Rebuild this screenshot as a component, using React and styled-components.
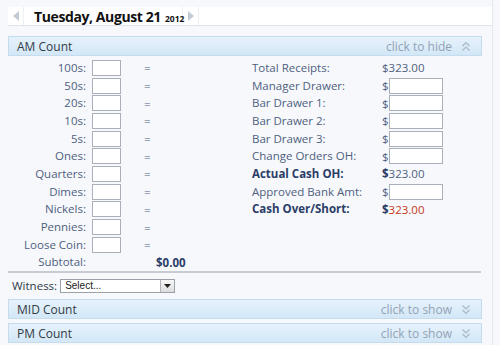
import React from "react";
import styled, { createGlobalStyle } from "styled-components";

const GlobalStyle = createGlobalStyle`
    html, body {
        margin:0;
        padding:0;
        background:#f6f8fb;
        font-family:"Open Sans", "Noto Sans", sans-serif;
    }
`

const Page = styled.div`
    width:493px;
    height:345px;
    border-right:1px solid #e4e8ee;
    box-sizing:border-box;
    overflow:hidden;
`

const TopBar = styled.div`
    margin:7px 0 0 8px;
    height:18px;
    background:#ffffff;
    border-bottom:1px solid #dfe4ea;
    display:flex;
    align-items:center;
`

const ArrowCell = styled.div`
    width:15px;
    height:18px;
    flex-shrink:0;
    display:flex;
    align-items:center;
    justify-content:center;
    border-right:1px solid #eceff3;
`

const DateCell = styled.div`
    width:159px;
    flex-shrink:0;
    box-sizing:border-box;
    padding-left:10px;
    font-size:14px;
    font-weight:700;
    color:#111;
    white-space:nowrap;
    letter-spacing:-0.4px;
    border-right:1px solid #eceff3;

    small{
        font-size:8.5px;
        margin-left:4px;
        letter-spacing:0;
    }
`

const SectionHeader = styled.div`
    margin:${(p) => p.mt}px 0 0 8px;
    width:474px;
    height:20px;
    box-sizing:border-box;
    border:1px solid #c4dcee;
    background:linear-gradient(#e6f2fc, #d3e7f6);
    display:flex;
    align-items:center;
    justify-content:space-between;
    padding:0 10px 0 8px;
    font-size:12px;
    color:#333b46;
`

const Toggle = styled.span`
    color:#93a3b7;
    font-size:12px;
    display:flex;
    align-items:center;
    gap:9px;
`

const Body = styled.div`
    display:flex;
    padding-top:3px;
`

const LeftGrid = styled.div`
    width:244px;
    padding-left:8px;
    display:grid;
    grid-template-columns:78px 29px 1fr;
    column-gap:6px;
    grid-auto-rows:17.7px;
    align-items:center;
`

const RightGrid = styled.div`
    display:grid;
    grid-template-columns:130px 1fr;
    grid-auto-rows:17.7px;
    align-items:center;
`

const Label = styled.div`
    font-size:11.5px;
    line-height:14px;
    color:${(p) => (p.bold ? "#2c3d68" : "#4f5f7f")};
    font-weight:${(p) => (p.bold ? 700 : 400)};
    text-align:${(p) => (p.right ? "right" : "left")};
    white-space:nowrap;
`

const Box = styled.div`
    width:${(p) => p.w}px;
    height:16px;
    box-sizing:border-box;
    background:#ffffff;
    border:1px solid #a9b0ba;
`

const Equals = styled.div`
    font-size:11.5px;
    color:#4f5f7f;
    padding-left:17px;
`

const Money = styled.div`
    font-size:11.5px;
    color:#4f5f7f;
    display:flex;
    align-items:center;

    b{
        color:#2c3d68;
    }
    .red{
        color:#c7381d;
    }
`

const Subtotal = styled.div`
    font-size:11.5px;
    font-weight:700;
    color:#2c3d68;
    padding-left:29px;
`

const Divider = styled.div`
    margin:0 0 0 8px;
    width:473px;
    border-top:2px solid #c8ccd2;
`

const WitnessRow = styled.div`
    height:19px;
    display:flex;
    align-items:center;
    gap:3px;
    padding:3px 0 0 12px;
    font-size:11.5px;
    color:#2f3a48;
`

const Select = styled.div`
    width:115px;
    height:14px;
    box-sizing:border-box;
    background:#fff;
    border:1px solid #9aa1aa;
    display:flex;
    align-items:center;
    justify-content:space-between;
    font-family:"Liberation Sans", Arial, sans-serif;
    font-size:10px;
    color:#222;
    padding-left:4px;
`

const SelectBtn = styled.div`
    width:13px;
    height:12px;
    border-left:1px solid #b0b5bc;
    background:linear-gradient(#f8f8f8, #dcdcdc);
    display:flex;
    align-items:center;
    justify-content:center;
`

const Tri = ({ dir }) => (
    <svg width="8" height="10" viewBox="0 0 8 10">
        {dir === "left" ? (
            <polygon points="7,0 7,10 1,5" fill="#c4cbd4" />
        ) : (
            <polygon points="1,0 1,10 7,5" fill="#c4cbd4" />
        )}
    </svg>
)

const Chevrons = ({ up }) => (
    <svg width="10" height="11" viewBox="0 0 10 11">
        <g fill="none" stroke="#a9b8ca" strokeWidth="1.2" transform={up ? "" : "rotate(180 5 5.5)"}>
            <polyline points="1.5,5 5,1.5 8.5,5" />
            <polyline points="1.5,9.5 5,6 8.5,9.5" />
        </g>
    </svg>
)

const coins = ["100s", "50s", "20s", "10s", "5s", "Ones", "Quarters", "Dimes", "Nickels", "Pennies", "Loose Coin"]

const drawers = [
    { label: "Total Receipts:", value: "$323.00" },
    { label: "Manager Drawer:", input: true },
    { label: "Bar Drawer 1:", input: true },
    { label: "Bar Drawer 2:", input: true },
    { label: "Bar Drawer 3:", input: true },
    { label: "Change Orders OH:", input: true },
    { label: "Actual Cash OH:", bold: true, value: "323.00" },
    { label: "Approved Bank Amt:", input: true },
    { label: "Cash Over/Short:", bold: true, value: "323.00", red: true },
]

const App = () => {
    return (
        <Page>
            <GlobalStyle />
            <TopBar>
                <ArrowCell>
                    <Tri dir="left" />
                </ArrowCell>
                <DateCell>
                    Tuesday, August 21<small>2012</small>
                </DateCell>
                <ArrowCell>
                    <Tri dir="right" />
                </ArrowCell>
            </TopBar>

            <SectionHeader mt={10}>
                AM Count
                <Toggle>
                    click to hide <Chevrons up />
                </Toggle>
            </SectionHeader>

            <Body>
                <LeftGrid>
                    {coins.map((c) => (
                        <React.Fragment key={c}>
                            <Label right>{c}:</Label>
                            <Box w={29} />
                            <Equals>=</Equals>
                        </React.Fragment>
                    ))}
                    <Label right>Subtotal:</Label>
                    <div />
                    <Subtotal>$0.00</Subtotal>
                </LeftGrid>
                <RightGrid>
                    {drawers.map((d) => (
                        <React.Fragment key={d.label}>
                            <Label bold={d.bold}>{d.label}</Label>
                            {d.input ? (
                                <Money>
                                    $<Box w={54} />
                                </Money>
                            ) : d.bold ? (
                                <Money>
                                    <b>$</b>
                                    <span className={d.red ? "red" : ""}>{d.value}</span>
                                </Money>
                            ) : (
                                <Money>{d.value}</Money>
                            )}
                        </React.Fragment>
                    ))}
                </RightGrid>
            </Body>

            <Divider />

            <WitnessRow>
                Witness:
                <Select>
                    Select...
                    <SelectBtn>
                        <svg width="7" height="4" viewBox="0 0 7 4">
                            <polygon points="0,0 7,0 3.5,4" fill="#222" />
                        </svg>
                    </SelectBtn>
                </Select>
            </WitnessRow>

            <SectionHeader mt={4}>
                MID Count
                <Toggle>
                    click to show <Chevrons />
                </Toggle>
            </SectionHeader>
            <SectionHeader mt={4}>
                PM Count
                <Toggle>
                    click to show <Chevrons />
                </Toggle>
            </SectionHeader>
        </Page>
    );
}

export default App;
